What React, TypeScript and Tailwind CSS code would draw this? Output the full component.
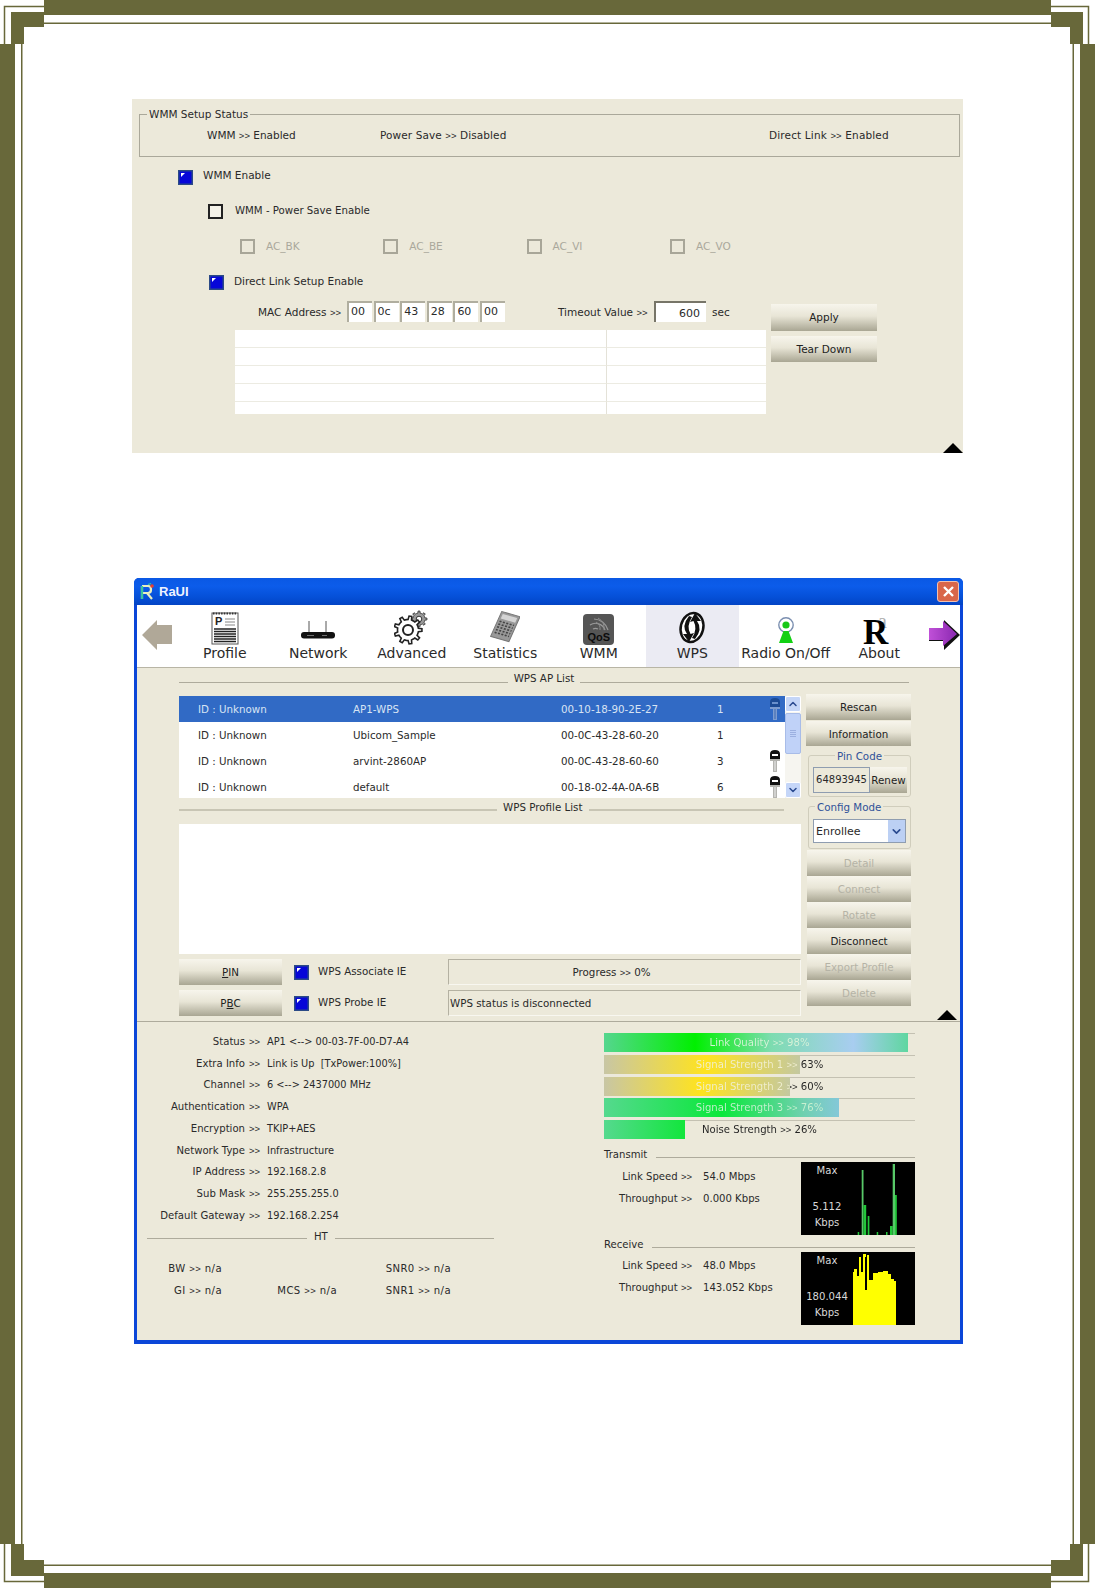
import React from "react";
import { ChevronUp, ChevronDown } from "lucide-react";

const btnBg = "bg-[linear-gradient(to_bottom,#f7f5ec,#e8e5d6_45%,#a9a693)]";

function Frame() {
  const c = "#68683a";
  return (
    <svg className="absolute inset-0" width="1095" height="1588" viewBox="0 0 1095 1588">
      <g fill={c}>
        <rect x="44" y="0" width="1007" height="15" />
        <rect x="44" y="1573" width="1007" height="15" />
        <rect x="0" y="44" width="15" height="1500" />
        <rect x="1080" y="44" width="15" height="1500" />
        <rect x="44" y="22.5" width="1007" height="1.5" />
        <rect x="44" y="1564.5" width="1007" height="1.5" />
        <rect x="21" y="44" width="1.5" height="1500" />
        <rect x="1072.5" y="44" width="1.5" height="1500" />
        <path d="M11 12H44V27H24V44H11Z" />
        <path d="M1083 12H1051V27H1070V44H1083Z" />
        <path d="M11 1576H44V1560H24V1544H11Z" />
        <path d="M1083 1576H1051V1560H1070V1544H1083Z" />
      </g>
      <g fill="none" stroke={c} strokeWidth="1.5">
        <path d="M4.5 44V6.5H44" />
        <path d="M1088.5 44V6.5H1051" />
        <path d="M4.5 1544V1581.5H44" />
        <path d="M1088.5 1544V1581.5H1051" />
      </g>
    </svg>
  );
}

function G() {
  return <span className="text-[9.5px] font-['Liberation_Sans',sans-serif]">&gt;&gt;</span>;
}

function Check({ on, off }: { on?: boolean; off?: boolean }) {
  if (on)
    return (
      <svg width="15" height="15" viewBox="0 0 15 15" className="shrink-0">
        <rect x="0.75" y="0.75" width="13.5" height="13.5" fill="#0606d8" stroke="#2b4a86" strokeWidth="1.5" />
        <path d="M3 7L7 3H3Z" fill="#fff" />
      </svg>
    );
  return <div className={`w-[15px] h-[15px] shrink-0 border-2 ${off ? "border-[#a8a698] bg-transparent" : "bg-[#f4f2e8] border-[#222]"}`} />;
}

function Btn({ children, w, h, dim, cls = "" }: { children: React.ReactNode; w: number; h: number; dim?: boolean; cls?: string }) {
  return (
    <div
      className={`flex items-center justify-center ${btnBg} ${dim ? "text-[#b5b3a6]" : "text-[#222]"} ${cls}`}
      style={{ width: w, height: h }}
    >
      {children}
    </div>
  );
}

function Triangle() {
  return (
    <svg width="20" height="10" viewBox="0 0 20 10">
      <path d="M0 10L10 0L20 10Z" fill="#000" />
    </svg>
  );
}

function Key({ blue }: { blue?: boolean }) {
  const head = blue ? "#1c4a94" : "#111";
  const shaft = blue ? "#7d9cd0" : "#b4b4b0";
  return (
    <svg width="12" height="24" viewBox="0 0 12 24">
      <path d="M1 10V5Q1 1 6 1Q11 1 11 5V10Z" fill={head} />
      <rect x="3" y="5" width="6" height="2" fill={blue ? "#6a90cc" : "#fff"} />
      <rect x="1" y="10" width="10" height="2" fill={shaft} />
      <rect x="4" y="12" width="4" height="11" fill={shaft} />
      <rect x="5.5" y="12" width="1" height="10" fill={blue ? "#3f68ae" : "#eee"} />
    </svg>
  );
}

function gearPath(cx: number, cy: number, ro: number, ri: number, teeth: number) {
  const pts: string[] = [];
  const step = (Math.PI * 2) / teeth;
  for (let i = 0; i < teeth; i++) {
    const a = i * step;
    [
      [ri, a - step * 0.5],
      [ri, a - step * 0.24],
      [ro, a - step * 0.14],
      [ro, a + step * 0.14],
      [ri, a + step * 0.24],
    ].forEach(([r, t]) => pts.push(`${(cx + r * Math.cos(t)).toFixed(2)} ${(cy + r * Math.sin(t)).toFixed(2)}`));
  }
  return `M${pts.join("L")}Z`;
}

function ProfileIcon() {
  return (
    <svg width="28" height="34" viewBox="0 0 28 34">
      <rect x="1" y="2" width="26" height="31" fill="#fff" stroke="#555" strokeWidth="1" />
      <path d="M2 2.5H26" stroke="#333" strokeWidth="2" strokeDasharray="1.5 1.2" />
      <text x="4" y="14" fontSize="11" fontWeight="700" fontFamily="'Liberation Sans',sans-serif" fill="#222">P</text>
      <path d="M14 8H24M14 11H24M14 14H24" stroke="#888" strokeWidth="1.2" />
      <path d="M3 18H25M3 20.5H25M3 23H25M3 25.5H25M3 28H25M3 30.5H25" stroke="#222" strokeWidth="1.3" />
    </svg>
  );
}
function NetworkIcon() {
  return (
    <svg width="36" height="20" viewBox="0 0 36 20" className="mb-[5px]">
      <path d="M9 1V12M26 1V12" stroke="#555" strokeWidth="1" />
      <rect x="1" y="12" width="34" height="6.5" rx="3" fill="#111" />
      <path d="M7 15.5H14M22 15.5H27" stroke="#888" strokeWidth="0.8" />
    </svg>
  );
}
function AdvancedIcon() {
  return (
    <svg width="36" height="36" viewBox="0 0 36 36">
      <path d={gearPath(25, 10, 8, 6, 8)} fill="#9a9a9a" stroke="#444" strokeWidth="1" />
      <circle cx="25" cy="10" r="2.8" fill="#fff" stroke="#333" strokeWidth="1" />
      <path d={gearPath(14, 21, 14, 10.5, 9)} fill="#fff" stroke="#222" strokeWidth="1.6" />
      <circle cx="14" cy="21" r="5" fill="#fff" stroke="#222" strokeWidth="2" />
    </svg>
  );
}
function StatsIcon() {
  return (
    <svg width="30" height="34" viewBox="0 0 30 34" className="mb-[1px]">
      <g transform="rotate(16 15 17) skewX(-8)">
        <rect x="8" y="3" width="19" height="27" fill="#999" stroke="#777" />
        <rect x="10" y="5" width="15" height="5" fill="#d4d4d4" />
        <path d="M10 13H25M10 16H25M10 19H25M10 22H25M10 25H25" stroke="#444" strokeWidth="1.6" strokeDasharray="2 1.5" />
      </g>
    </svg>
  );
}
function WmmIcon() {
  return (
    <div className="w-[31px] h-[31px] rounded-[4px] bg-[#555] flex flex-col items-center overflow-hidden">
      <svg width="31" height="18" viewBox="0 0 31 18">
        <path d="M10 15A5 5 0 0 1 15 15M7 11A10 10 0 0 1 22 16M11 5A15 15 0 0 1 25 16" fill="none" stroke="#999" strokeWidth="1.2" />
        <path d="M15 4A12 12 0 0 1 21 16M13 8A8 8 0 0 1 17 16" fill="none" stroke="#8a8a8a" strokeWidth="1" />
      </svg>
      <span className="text-[11px] leading-[11px] font-bold text-[#0c0c0c] font-['Liberation_Sans',sans-serif]">QoS</span>
    </div>
  );
}
function WpsIcon() {
  return (
    <svg width="30" height="33" viewBox="0 0 30 33" className="mb-[1px]">
      <g transform="rotate(14 15 16.5)">
        <ellipse cx="15" cy="16.5" rx="12.5" ry="16" fill="#111" />
        <ellipse cx="15" cy="16.5" rx="10" ry="13.5" fill="#fff" />
      </g>
      <path d="M12 5Q4 15 10 23L6 23L12 31L17 22L13.5 23Q9 15 15 6Z" fill="#111" />
      <path d="M18 28Q26 18 20 10L24 10L18 2L13 11L16.5 10Q21 18 15 27Z" fill="#111" />
    </svg>
  );
}
function RadioIcon() {
  return (
    <svg width="18" height="26" viewBox="0 0 18 26" className="mb-[2px]">
      <circle cx="9" cy="8" r="7.2" fill="#fff" stroke="#7b8fb0" strokeWidth="1.4" />
      <circle cx="9" cy="8" r="3.6" fill="#18c818" />
      <path d="M6.5 14H11.5L16 26H2Z" fill="#12d012" />
    </svg>
  );
}
function AboutIcon() {
  return (
    <svg width="32" height="33" viewBox="0 0 32 33" fontFamily="'Liberation Serif',serif" className="overflow-visible">
      <text x="15" y="16" fontSize="20" fill="#b0b0b0">a</text>
      <text x="0" y="32" fontSize="35" fontWeight="700" fill="#000">R</text>
    </svg>
  );
}

const tools: [string, React.ReactNode, boolean?][] = [
  ["Profile", <ProfileIcon />],
  ["Network", <NetworkIcon />],
  ["Advanced", <AdvancedIcon />],
  ["Statistics", <StatsIcon />],
  ["WMM", <WmmIcon />],
  ["WPS", <WpsIcon />, true],
  ["Radio On/Off", <RadioIcon />],
  ["About", <AboutIcon />],
];

const apRows: [string, string, string, boolean, boolean][] = [
  ["AP1-WPS", "00-10-18-90-2E-27", "1", true, true],
  ["Ubicom_Sample", "00-0C-43-28-60-20", "1", false, false],
  ["arvint-2860AP", "00-0C-43-28-60-60", "3", false, true],
  ["default", "00-18-02-4A-0A-6B", "6", false, true],
];

const status: [string, string][] = [
  ["Status", "AP1 <--> 00-03-7F-00-D7-A4"],
  ["Extra Info", "Link is Up  [TxPower:100%]"],
  ["Channel", "6 <--> 2437000 MHz"],
  ["Authentication", "WPA"],
  ["Encryption", "TKIP+AES"],
  ["Network Type", "Infrastructure"],
  ["IP Address", "192.168.2.8"],
  ["Sub Mask", "255.255.255.0"],
  ["Default Gateway", "192.168.2.254"],
];

const greenBar = "linear-gradient(to right,#55d98e,#0ae83a 50%,#70d0b0 85%,#84c8d8)";
const bars: [string, string, number, string, string][] = [
  ["Link Quality", "98%", 304, "linear-gradient(to right,#55d68e,#00f000 30%,#7ddcb0 55%,#a8cdf0 82%,#5fd6a0)", "#d8f2d8"],
  ["Signal Strength 1", "63%", 196, "linear-gradient(to right,#c8c6a4,#ffe31e 52%,#c4c8a0)", "#f0eed0"],
  ["Signal Strength 2", "60%", 186, "linear-gradient(to right,#c8c6a4,#ffe31e 52%,#c4c8a0)", "#f0eed0"],
  ["Signal Strength 3", "76%", 235, greenBar, "#c8f0d0"],
  ["Noise Strength", "26%", 81, "linear-gradient(to right,#55d98e,#12e63c)", "#222"],
];

function Bar({ label, pct, fill, grad, tint }: { label: string; pct: string; fill: number; grad: string; tint: string }) {
  return (
    <div className="relative h-[19px] w-[311px] border-t border-[#c4c1b2] flex items-center justify-center">
      <div className="absolute left-0 -top-[1px] h-[19px]" style={{ width: fill, backgroundImage: grad }} />
      <span
        className="relative bg-clip-text text-transparent w-full text-center"
        style={{ backgroundImage: `linear-gradient(to right,${tint} ${fill}px,#222 ${fill}px)` }}
      >
        {label} <G /> {pct}
      </span>
    </div>
  );
}

function Graph({ value, children }: { value: string; children: React.ReactNode }) {
  return (
    <div className="w-[114px] h-[73px] bg-black flex text-[#d8d8d8]">
      <div className="w-[52px] flex flex-col items-center pt-[2px]">
        <span className="leading-[14px]">Max</span>
        <span className="leading-[16px] mt-[21px]">{value}</span>
        <span className="leading-[16px]">Kbps</span>
      </div>
      {children}
    </div>
  );
}

function SpeedRow({ label, value }: { label: string; value: string }) {
  return (
    <div className="flex h-[22px] items-center whitespace-nowrap">
      <span className="w-[88px] text-right">{label} <G /></span>
      <span className="ml-[11px]">{value}</span>
    </div>
  );
}

export default function App() {
  return (
    <div className="relative w-[1095px] h-[1588px] bg-white overflow-hidden text-[10.3px] leading-[14px] text-[#2a2a2a] font-['DejaVu_Sans',sans-serif]">
      <Frame />
      <div className="relative pt-[99px] pl-[132px]">
        {/* WMM panel */}
        <div className="relative w-[831px] h-[354px] bg-[#ece9da] pt-[15px] text-[10.5px]">
          <div className="relative ml-[7px] w-[821px] h-[43px] border border-[#aaa89a] flex items-center pl-[67px] pb-[1px]">
            <span className="absolute left-[7px] -top-[8px] bg-[#ece9da] px-[2px]">WMM Setup Status</span>
            <span className="w-[173px]">WMM <G /> Enabled</span>
            <span className="w-[389px] tracking-[0.1px]">Power Save <G /> Disabled</span>
            <span className="tracking-[0.15px]">Direct Link <G /> Enabled</span>
          </div>
          <div className="mt-[13px] ml-[46px] flex items-center h-[15px] gap-[10px]">
            <Check on />
            <span className="-mt-[5px]">WMM Enable</span>
          </div>
          <div className="mt-[19px] ml-[76px] flex items-center h-[15px] gap-[12px]">
            <Check />
            <span className="-mt-[2px] text-[10.2px]">WMM - Power Save Enable</span>
          </div>
          <div className="mt-[20px] ml-[108px] flex h-[15px] text-[#aaa89c]">
            {["AC_BK", "AC_BE", "AC_VI", "AC_VO"].map((t) => (
              <div key={t} className="w-[143.3px] flex items-center gap-[11px]">
                <Check off />
                <span className="-mt-[2px]">{t}</span>
              </div>
            ))}
          </div>
          <div className="mt-[21px] ml-[77px] flex items-center h-[15px] gap-[10px]">
            <Check on />
            <span className="-mt-[3px]">Direct Link Setup Enable</span>
          </div>
          <div className="mt-[11px] ml-[103px] flex">
            <div className="w-[531px]">
              <div className="flex items-center h-[21px] pl-[23px] whitespace-nowrap">
                <span className="w-[89px] pt-[2px]">MAC Address <G /></span>
                <div className="flex gap-[1.6px]">
                  {["00", "0c", "43", "28", "60", "00"].map((v, i) => (
                    <div key={i} className="w-[25px] h-[21px] bg-white border-l-2 border-t-2 border-[#b0ae9f] pl-[2px] text-[11px] leading-[18px]">
                      {v}
                    </div>
                  ))}
                </div>
                <span className="ml-[53px] w-[96px] pt-[2px]">Timeout Value <G /></span>
                <div className="w-[52px] h-[21px] bg-white border-l-2 border-t-2 border-[#777568] text-right pr-[6px] text-[11px] leading-[22px]">
                  600
                </div>
                <span className="ml-[6px]">sec</span>
              </div>
              <div className="mt-[8px] h-[84px] bg-white grid grid-cols-[372px_159px] grid-rows-[18px_18px_18px_18px_12px]">
                {[0, 1, 2, 3, 4].map((r) => (
                  <React.Fragment key={r}>
                    <div className={`border-r border-r-[#e4e2d8] ${r < 4 ? "border-b border-b-[#ecebe2]" : ""}`} />
                    <div className={`${r < 4 ? "border-b border-b-[#ecebe2]" : ""}`} />
                  </React.Fragment>
                ))}
              </div>
            </div>
            <div className="ml-[5px] pt-[3px]">
              <Btn w={106} h={27}><span className="-mt-[2px]">Apply</span></Btn>
              <Btn w={106} h={26} cls="mt-[5px]"><span className="-mt-[1px]">Tear Down</span></Btn>
            </div>
          </div>
          <div className="absolute right-0 bottom-0 flex">
            <Triangle />
          </div>
        </div>

        {/* RaUI window */}
        <div className="mt-[125px] ml-[2px] w-[829px] h-[766px] bg-[#0b46d8] rounded-t-[5px] flex flex-col overflow-hidden">
          <div className="h-[27px] shrink-0 flex items-center pl-[5px] pr-[4px] bg-[linear-gradient(to_bottom,#0a58e4,#0c5cea_30%,#0550d8_70%,#0344c4)]">
            <svg width="17" height="18" viewBox="0 0 17 18">
              <path d="M3 3V16M3 3H9Q12 3 12 6.5Q12 10 9 10H3M8 10L13 16" fill="none" stroke="#e8eec0" strokeWidth="2.2" />
              <path d="M3 3V16" stroke="#3ac4a0" strokeWidth="2.2" />
              <circle cx="13" cy="3" r="1.8" fill="#e84030" />
              <path d="M9 1.5L12 0.5" stroke="#3ac4a0" strokeWidth="1.2" />
            </svg>
            <span className="ml-[3px] text-[#eef2ff] text-[13px] font-['Liberation_Sans',sans-serif] font-semibold">RaUI</span>
            <div className="ml-auto w-[22px] h-[21px] rounded-[3px] bg-[#d9664a] border border-[#f0c0b0] flex items-center justify-center">
              <svg width="13" height="13" viewBox="0 0 13 13">
                <path d="M2 2L11 11M11 2L2 11" stroke="#fff" strokeWidth="2.4" />
              </svg>
            </div>
          </div>
          <div className="mx-[3px] h-[735px] flex flex-col bg-[#ece9da]">
            {/* toolbar */}
            <div className="h-[63px] shrink-0 bg-white border-b border-[#b8b5a5] flex">
              <div className="w-[42.4px] pl-[5px] pt-[15px]">
                <svg width="30" height="30" viewBox="0 0 30 30">
                  <path d="M0 15L15 0V5H30V24H15V30Z" fill="#b0a898" />
                </svg>
              </div>
              <div className="grid grid-cols-[repeat(8,93.5px)]">
                {tools.map(([t, icon, active]) => (
                  <div key={t} className={`flex flex-col items-center h-[62px] ${active ? "bg-[#ebebf3]" : ""}`}>
                    <div className="h-[40px] flex items-end justify-center">{icon}</div>
                    <span className="text-[14px] leading-[16px] whitespace-nowrap text-[#2a2a2a]">{t}</span>
                  </div>
                ))}
              </div>
              <div className="ml-[3px] pt-[14px]">
                <svg width="31" height="32" viewBox="0 0 31 32">
                  <defs>
                    <linearGradient id="pu" x1="0" x2="1">
                      <stop offset="0" stopColor="#c050d8" />
                      <stop offset="1" stopColor="#8a28b0" />
                    </linearGradient>
                  </defs>
                  <path d="M0 10H15V1L31 16L15 31V22H0Z" fill="#111" />
                  <path d="M0 9H14V2L28 15L14 27V21H0Z" fill="url(#pu)" />
                </svg>
              </div>
            </div>

            {/* WPS area */}
            <div className="relative h-[354px] shrink-0 border-b border-[#aeab9c] pl-[42px]">
              <div className="mt-[7px] h-[14px] w-[730px] flex items-center">
                <div className="flex-1 border-t border-[#aeab9c]" />
                <span className="mx-[6px] -mt-[9px]">WPS AP List</span>
                <div className="flex-1 border-t border-[#aeab9c]" />
              </div>
              <div className="mt-[5px] flex">
                <div className="w-[622px] pt-[2px]">
                  <div className="flex h-[102px]">
                    <div className="w-[606px] bg-white overflow-hidden">
                      {apRows.map(([ssid, mac, ch, sel, key], i) => (
                        <div
                          key={i}
                          className={`h-[26px] pl-[19px] grid grid-cols-[155px_208px_156px_52px_auto] items-center ${sel ? "bg-[#316ac5] text-[#d8e4f4]" : ""}`}
                        >
                          <span>ID : Unknown</span>
                          <span>{ssid}</span>
                          <span>{mac}</span>
                          <span>{ch}</span>
                          <span className="flex">{key && <Key blue={sel} />}</span>
                        </div>
                      ))}
                    </div>
                    <div className="w-[16px] bg-[#f6f5f0] flex flex-col">
                      <div className="h-[16px] bg-[#c5d6f8] rounded-[2px] border border-white flex items-center justify-center">
                        <ChevronUp size={12} strokeWidth={3} className="text-[#2a4a90]" />
                      </div>
                      <div className="mt-[1px] h-[41px] bg-[#c0d2f8] rounded-[2px] border border-[#a8bce8] flex flex-col items-center justify-center gap-[1px]">
                        <div className="w-[6px] border-t border-[#9cb0e0]" />
                        <div className="w-[6px] border-t border-[#9cb0e0]" />
                        <div className="w-[6px] border-t border-[#9cb0e0]" />
                        <div className="w-[6px] border-t border-[#9cb0e0]" />
                      </div>
                      <div className="mt-auto h-[16px] bg-[#c5d6f8] rounded-[2px] border border-white flex items-center justify-center">
                        <ChevronDown size={12} strokeWidth={3} className="text-[#2a4a90]" />
                      </div>
                    </div>
                  </div>
                  <div className="h-[26px] w-[605px] flex items-start">
                    <div className="w-[318px] border-t-2 border-[#c8c5b4] mt-[11px]" />
                    <span className="mx-[6px] mt-[2px]">WPS Profile List</span>
                    <div className="flex-1 border-t-2 border-[#c8c5b4] mt-[11px]" />
                  </div>
                  <div className="h-[130px] bg-white" />
                  <div className="mt-[5px] flex">
                    <div className="flex flex-col gap-[5px]">
                      <Btn w={103} h={26}><span><u>P</u>IN</span></Btn>
                      <Btn w={103} h={26}><span>P<u>B</u>C</span></Btn>
                    </div>
                    <div className="ml-[12px] w-[154px] flex flex-col gap-[5px]">
                      <div className="h-[26px] flex items-center gap-[9px]"><Check on /><span className="-mt-[2px]">WPS Associate IE</span></div>
                      <div className="h-[26px] flex items-center gap-[9px]"><Check on /><span className="-mt-[2px]">WPS Probe IE</span></div>
                    </div>
                    <div className="w-[353px] flex flex-col gap-[5px]">
                      <div className="h-[26px] border-t border-l border-[#b4b1a2] border-r border-b border-r-[#f8f7f0] border-b-[#f8f7f0] flex items-center justify-center pr-[26px] pt-[1px]">
                        <span>Progress <G /> 0%</span>
                      </div>
                      <div className="h-[26px] border-t border-l border-[#b4b1a2] border-r border-b border-r-[#f8f7f0] border-b-[#f8f7f0] flex items-center pl-[1px]">
                        WPS status is disconnected
                      </div>
                    </div>
                  </div>
                </div>
                <div className="ml-[5px] w-[106px]">
                  <Btn w={105} h={26}>Rescan</Btn>
                  <Btn w={105} h={25} cls="mt-[1px]">Information</Btn>
                  <div className="relative ml-[2px] mt-[9px] w-[103px] h-[42px] border border-[#d0cdbc] rounded-[3px] pt-[11px] pl-[4px] flex">
                    <span className="absolute left-[26px] -top-[7px] px-[2px] bg-[#ece9da] text-[#2f5299]">Pin Code</span>
                    <div className="w-[57px] h-[26px] border border-[#8f9db0] flex items-center justify-center text-[10px]">64893945</div>
                    <Btn w={37} h={26}>Renew</Btn>
                  </div>
                  <div className="relative ml-[2px] mt-[9px] w-[103px] h-[43px] border border-[#d0cdbc] rounded-[3px] pt-[12px] pl-[4px]">
                    <span className="absolute left-[6px] -top-[7px] px-[2px] bg-[#ece9da] text-[#2f5299]">Config Mode</span>
                    <div className="w-[93px] h-[24px] bg-white border border-[#8f9db0] flex items-center pl-[2px] text-[11px]">
                      <span className="pt-[1px]">Enrollee</span>
                      <div className="ml-auto w-[17px] h-[22px] bg-[#bcd0f4] flex items-center justify-center">
                        <ChevronDown size={13} strokeWidth={3} className="text-[#2a4a90]" />
                      </div>
                    </div>
                  </div>
                  <div className="ml-[1px] mt-[1px]">
                    <Btn w={104} h={26} dim>Detail</Btn>
                    <Btn w={104} h={26} dim>Connect</Btn>
                    <Btn w={104} h={26} dim>Rotate</Btn>
                    <Btn w={104} h={26}>Disconnect</Btn>
                    <Btn w={104} h={26} dim>Export Profile</Btn>
                    <Btn w={104} h={26} dim>Delete</Btn>
                  </div>
                </div>
              </div>
              <div className="absolute right-[3px] bottom-[1px] flex">
                <Triangle />
              </div>
            </div>

            {/* Status area */}
            <div className="flex flex-1 text-[10.1px]">
              <div className="w-[467px] pt-[9px]">
                {status.map(([k, v]) => (
                  <div key={k} className="flex items-center h-[21.75px] whitespace-pre">
                    <span className="w-[108px] text-right">{k}</span>
                    <span className="w-[22px] pl-[4px]"><G /></span>
                    <span className="text-[9.8px]">{v}</span>
                  </div>
                ))}
                <div className="mt-[5px] ml-[10px] w-[347px] h-[14px] flex items-center">
                  <div className="w-[160px] border-t border-[#aeab9c]" />
                  <span className="mx-[7px] -mt-[3px]">HT</span>
                  <div className="flex-1 border-t border-[#aeab9c]" />
                </div>
                <div className="mt-[12px] flex h-[44px] tracking-[0.4px]">
                  <div className="w-[85px] flex flex-col text-right">
                    <span className="h-[22px] leading-[22px]">BW <G /> n/a</span>
                    <span className="h-[22px] leading-[22px]">GI <G /> n/a</span>
                  </div>
                  <div className="w-[115px] pt-[22px] text-right leading-[22px]">MCS <G /> n/a</div>
                  <div className="w-[114px] flex flex-col text-right">
                    <span className="h-[22px] leading-[22px]">SNR0 <G /> n/a</span>
                    <span className="h-[22px] leading-[22px]">SNR1 <G /> n/a</span>
                  </div>
                </div>
              </div>
              <div className="w-[311px] pt-[11px]">
                <div className="flex flex-col gap-[2.75px]">
                  {bars.map(([l, p, f, g, t]) => (
                    <Bar key={l} label={l} pct={p} fill={f} grad={g} tint={t} />
                  ))}
                </div>
                <div className="mt-[9px] h-[14px] flex items-center">
                  <span className="-mt-[1px]">Transmit</span>
                  <div className="ml-[9px] mt-[4px] flex-1 border-t border-[#aeab9c]" />
                </div>
                <div className="flex">
                  <div className="w-[197px] pt-[4px]">
                    <SpeedRow label="Link Speed" value="54.0 Mbps" />
                    <SpeedRow label="Throughput" value="0.000 Kbps" />
                  </div>
                  <Graph value="5.112">
                    <svg width="62" height="73" viewBox="0 0 62 73">
                      <g fill="#22c83a">
                        <rect x="4.7" y="70" width="1.5" height="3" />
                        <rect x="8.7" y="8" width="1.8" height="65" fill="#58c868" />
                        <rect x="10.5" y="43" width="2.7" height="30" />
                        <rect x="14.7" y="54" width="1.7" height="19" />
                        <rect x="23.7" y="70" width="1.5" height="3" />
                        <rect x="33" y="70" width="1.5" height="3" />
                        <rect x="37" y="64" width="2.7" height="9" />
                        <rect x="39.7" y="2" width="2.3" height="71" fill="#58c868" />
                        <rect x="42" y="33" width="1.8" height="40" />
                      </g>
                    </svg>
                  </Graph>
                </div>
                <div className="mt-[3px] h-[14px] flex items-center">
                  <span className="-mt-[1px]">Receive</span>
                  <div className="ml-[8px] mt-[4px] flex-1 border-t border-[#aeab9c]" />
                </div>
                <div className="flex">
                  <div className="w-[197px] pt-[3px]">
                    <SpeedRow label="Link Speed" value="48.0 Mbps" />
                    <SpeedRow label="Throughput" value="143.052 Kbps" />
                  </div>
                  <Graph value="180.044">
                    <svg width="62" height="73" viewBox="0 0 62 73">
                      <path
                        d="M0 73V20H1V17H4V24H6V5H8V20H10V2H13V5H12V38H14V3H16V28H20V21H25V20H30V19H35V22H38V27H41V29H43V73Z"
                        fill="#ffff00"
                      />
                    </svg>
                  </Graph>
                </div>
              </div>
            </div>
          </div>
        </div>
      </div>
    </div>
  );
}
